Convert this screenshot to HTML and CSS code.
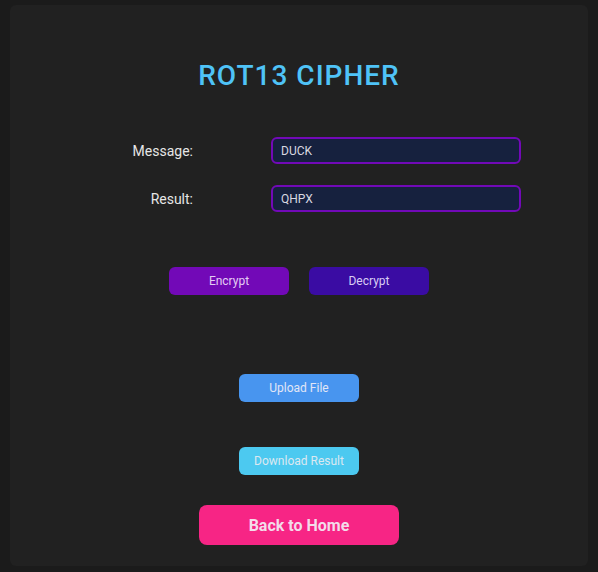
FILE: index.html
```html
<!DOCTYPE html>
<html lang="en">
<head>
<meta charset="utf-8">
<title>ROT13 Cipher</title>
<link rel="stylesheet" href="styles.css">
</head>
<body>
<main class="card">
  <h1 class="title">ROT13 CIPHER</h1>
  <div class="form">
    <div class="row">
      <label class="label" for="msg">Message:</label>
      <input class="field" id="msg" type="text" value="DUCK">
    </div>
    <div class="row">
      <label class="label" for="res">Result:</label>
      <input class="field" id="res" type="text" value="QHPX">
    </div>
  </div>
  <div class="actions">
    <button class="btn btn-encrypt">Encrypt</button>
    <button class="btn btn-decrypt">Decrypt</button>
  </div>
  <div class="files">
    <button class="btn btn-upload">Upload File</button>
    <button class="btn btn-download">Download Result</button>
  </div>
  <button class="btn-home">Back to Home</button>
</main>
</body>
</html>
```
FILE: styles.css
```css
* { box-sizing: border-box; }
html, body { height: 100%; }
body {
  margin: 0;
  padding: 5px 10px 6px 10px;
  background: #1b1b1b;
  font-family: Roboto, "Liberation Sans", sans-serif;
}
.card {
  width: 578px;
  height: 561px;
  background: #212121;
  border-radius: 6px;
  display: flex;
  flex-direction: column;
  align-items: center;
  padding-top: 55px;
}
.title {
  margin: 0;
  font-size: 28px;
  font-weight: 500;
  line-height: 32px;
  letter-spacing: 1px;
  color: #4fc3f7;
}
.form {
  margin-top: 45px;
  display: flex;
  flex-direction: column;
  gap: 21px;
}
.row {
  display: flex;
  align-items: center;
  gap: 78px;
  width: 444px;
}
.label {
  width: 116px;
  text-align: right;
  font-size: 14px;
  color: #e6e6e6;
}
.field {
  width: 250px;
  height: 27px;
  border: 2px solid #7209b7;
  border-radius: 6px;
  background: #16213e;
  color: #d8d8e0;
  font-family: inherit;
  font-size: 12px;
  padding: 0 8px;
  outline: none;
}
.actions {
  margin-top: 55px;
  display: flex;
  gap: 20px;
}
.btn {
  width: 120px;
  height: 28px;
  border: none;
  border-radius: 6px;
  font-family: inherit;
  font-size: 12px;
  padding: 0;
}
.btn-encrypt { background: #7209b7; color: #e4cdf3; }
.btn-decrypt { background: #3a0ca3; color: #d8cdf3; }
.files {
  margin-top: 79px;
  display: flex;
  flex-direction: column;
  gap: 45px;
}
.btn-upload { background: #4895ef; color: #e0e6f6; }
.btn-download { background: #4cc9f0; color: #dce8f0; }
.btn-home {
  margin-top: 30px;
  width: 200px;
  height: 40px;
  border: none;
  border-radius: 8px;
  background: #f72585;
  color: #f3dcea;
  font-family: inherit;
  font-size: 16px;
  font-weight: 700;
}
```
